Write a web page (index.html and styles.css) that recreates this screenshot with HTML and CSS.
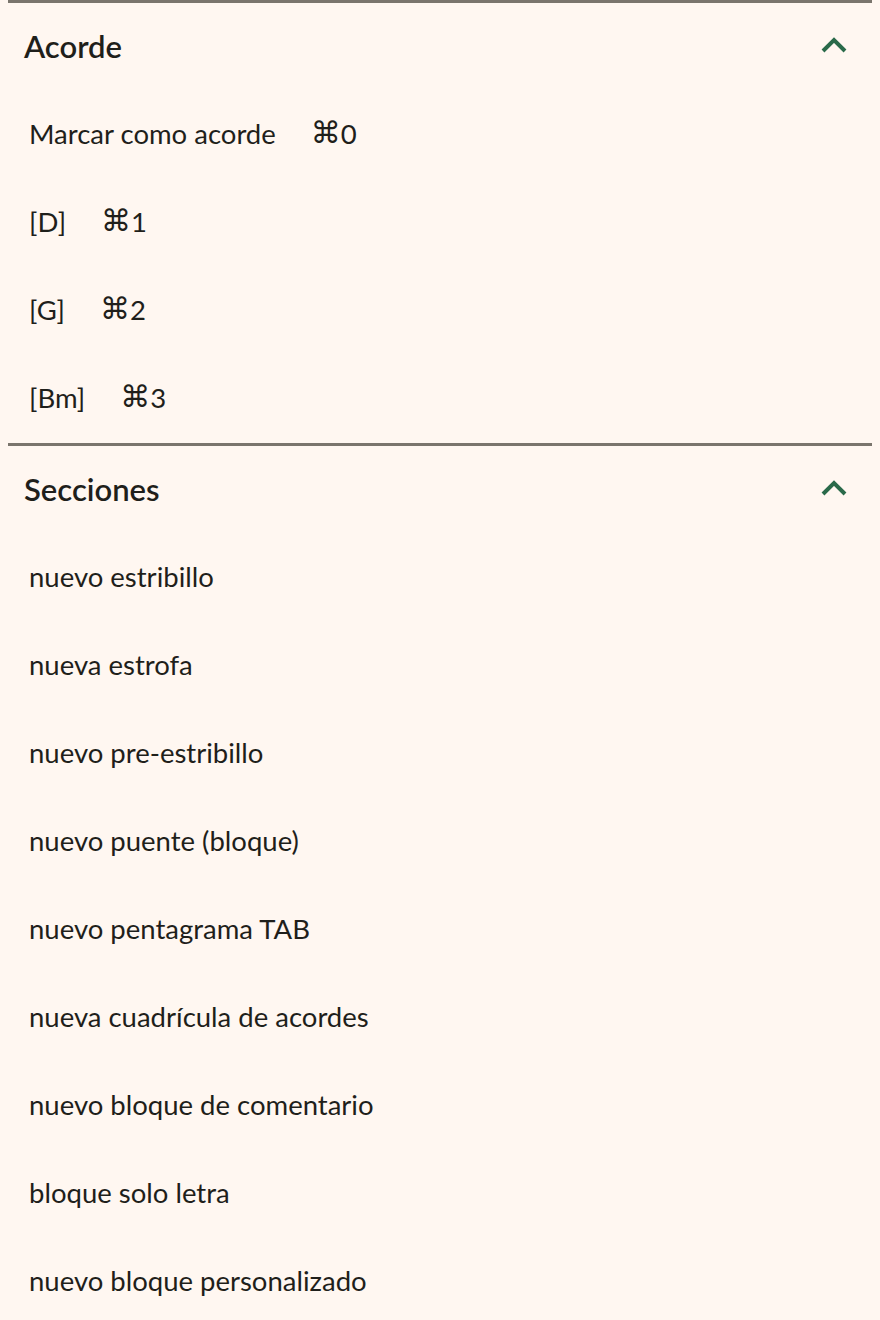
FILE: index.html
```html
<!DOCTYPE html>
<html lang="es">
<head>
    <meta charset="UTF-8">
    <meta name="viewport" content="width=device-width, initial-scale=1.0">
    <title>Insertar</title>
    <link rel="stylesheet" href="styles.css">
</head>
<body>
    <div class="panel">
        <section class="group">
            <div class="group-header">
                <h2>Acorde</h2>
                <svg class="chevron" width="28" height="18" viewBox="0 0 28 18">
                    <path d="M3 15 L14 4 L25 15" fill="none" stroke="currentColor" stroke-width="4"/>
                </svg>
            </div>
            <ul class="items">
                <li><span class="label">Marcar como acorde</span><span class="kbd"><span class="cmd">⌘</span>0</span></li>
                <li><span class="label">[D]</span><span class="kbd"><span class="cmd">⌘</span>1</span></li>
                <li><span class="label">[G]</span><span class="kbd"><span class="cmd">⌘</span>2</span></li>
                <li><span class="label">[Bm]</span><span class="kbd"><span class="cmd">⌘</span>3</span></li>
            </ul>
        </section>

        <section class="group">
            <div class="group-header">
                <h2>Secciones</h2>
                <svg class="chevron" width="28" height="18" viewBox="0 0 28 18">
                    <path d="M3 15 L14 4 L25 15" fill="none" stroke="currentColor" stroke-width="4"/>
                </svg>
            </div>
            <ul class="items">
                <li><span class="label">nuevo estribillo</span></li>
                <li><span class="label">nueva estrofa</span></li>
                <li><span class="label">nuevo pre-estribillo</span></li>
                <li><span class="label">nuevo puente (bloque)</span></li>
                <li><span class="label">nuevo pentagrama TAB</span></li>
                <li><span class="label">nueva cuadrícula de acordes</span></li>
                <li><span class="label">nuevo bloque de comentario</span></li>
                <li><span class="label">bloque solo letra</span></li>
                <li><span class="label">nuevo bloque personalizado</span></li>
            </ul>
        </section>
    </div>
</body>
</html>
```

FILE: styles.css
```css
* {
    margin: 0;
    padding: 0;
    box-sizing: border-box;
}

body {
    font-family: Lato, 'Noto Sans', sans-serif;
    background: #fff7f1;
    color: #1f1f1b;
    padding: 0 8px;
}

.group {
    border-top: 3px solid #7a756d;
}

.group-header {
    display: flex;
    align-items: center;
    justify-content: space-between;
    height: 88px;
    padding: 0 24px 2px 16px;
}

.group-header h2 {
    font-size: 31px;
    font-weight: 600;
}

.chevron {
    color: #2a6a4a;
    margin-top: -2px;
}

.items {
    list-style: none;
}

.items li {
    display: flex;
    align-items: center;
    height: 88px;
    padding: 0 0 4px 21px;
    font-size: 27.5px;
}

.kbd {
    margin-left: 35px;
    display: flex;
    align-items: center;
}

.cmd {
    font-family: 'DejaVu Sans', sans-serif;
    font-size: 30px;
    line-height: 1;
}
```
